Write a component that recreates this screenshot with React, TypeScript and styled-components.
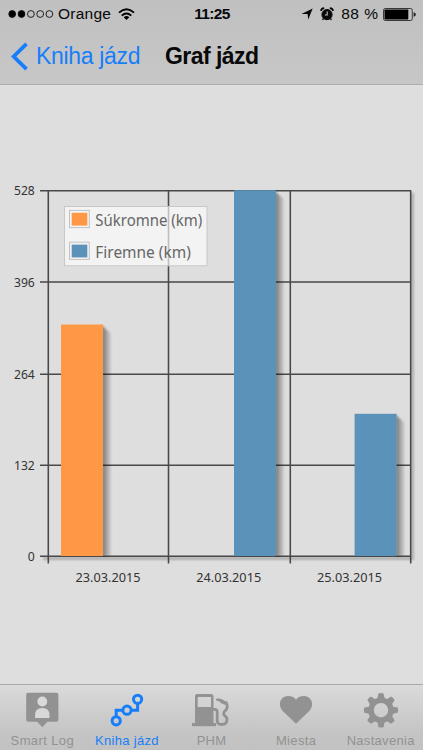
import React from 'react';
import styled, { createGlobalStyle } from 'styled-components';

const GlobalStyle = createGlobalStyle`
  * { box-sizing: border-box; }
  body { margin: 0; background: #dedede; font-family: "Liberation Sans", Arial, sans-serif; }
`;

const Screen = styled.div`
  width: 423px;
  height: 750px;
  display: flex;
  flex-direction: column;
  overflow: hidden;
  background: #dedede;
`;

const Header = styled.header`
  height: 85px;
  flex: none;
  background: linear-gradient(#c0c0c0, #c7c7c7);
  border-bottom: 1px solid #adadad;
`;

const StatusBar = styled.div`
  height: 28px;
  display: grid;
  grid-template-columns: 1fr auto 1fr;
  align-items: center;
  padding: 0 7px 0 8px;
  color: #080808;
`;

const StatusGroup = styled.div<{ $end?: boolean }>`
  display: flex;
  align-items: center;
  justify-content: ${(p) => (p.$end ? 'flex-end' : 'flex-start')};
`;

const StatusText = styled.span<{ $bold?: boolean; $spacing?: number; $left?: number; $right?: number }>`
  font-size: 15.5px;
  line-height: 28px;
  font-weight: ${(p) => (p.$bold ? 700 : 400)};
  letter-spacing: ${(p) => p.$spacing ?? 0}px;
  margin-left: ${(p) => p.$left ?? 0}px;
  margin-right: ${(p) => p.$right ?? 0}px;
  white-space: nowrap;
`;

const NavBar = styled.nav`
  height: 56px;
  display: flex;
  align-items: center;
  padding-left: 10px;
`;

const BackButton = styled.button`
  display: flex;
  align-items: center;
  gap: 8px;
  width: 155px;
  flex: none;
  padding: 0;
  border: 0;
  background: none;
  color: #177efb;
  font: 23px/56px "Liberation Sans", Arial, sans-serif;
  letter-spacing: -0.33px;
  white-space: nowrap;
`;

const Title = styled.h1`
  margin: 0;
  font-size: 23px;
  line-height: 56px;
  font-weight: 700;
  letter-spacing: -0.55px;
  color: #080808;
  white-space: nowrap;
`;

const Content = styled.main`
  flex: 1;
  min-height: 0;
  border-top: 1px solid #e2e2e2;
`;

const Chart = styled.svg`
  display: block;
  font-family: "Noto Sans", sans-serif;
`;

const TabBar = styled.footer`
  height: 66px;
  flex: none;
  display: grid;
  grid-template-columns: repeat(5, 1fr);
  border-top: 1px solid #a9a9a9;
  background: linear-gradient(#dadada, #c4c4c4 75%, #c2c2c2);
`;

const Tab = styled.div<{ $active?: boolean }>`
  display: flex;
  flex-direction: column;
  align-items: center;
  padding-top: 7px;
  color: ${(p) => (p.$active ? '#177efb' : '#929292')};
`;

const TabLabel = styled.span<{ $spacing: number }>`
  margin-top: 4px;
  font-size: 13px;
  line-height: 17px;
  letter-spacing: ${(p) => p.$spacing}px;
  white-space: nowrap;
`;

const ROWS = [
  { value: 528, y: 190.8 },
  { value: 396, y: 282 },
  { value: 264, y: 374.2 },
  { value: 132, y: 465.2 },
  { value: 0, y: 556.3 },
];
const COLUMNS = [48.3, 168.5, 290.3, 410.7];
const DATES = [
  { label: '23.03.2015', x: 75.5 },
  { label: '24.03.2015', x: 196.2 },
  { label: '25.03.2015', x: 317 },
];
const BARS = [
  { x: 61, y: 324.5, color: '#ff9845' },
  { x: 234, y: 190.2, color: '#5b92b9' },
  { x: 354.6, y: 413.8, color: '#5b92b9' },
];
const LEGEND = [
  { label: 'Súkromne (km)', y: 210.4, length: 107, color: '#ff9845' },
  { label: 'Firemne (km)', y: 242.2, length: 95.5, color: '#5b92b9' },
];

const TripChart = () => (
  <Chart width="423" height="598" viewBox="0 86 423 598">
    <defs>
      <filter id="soft" x="-30%" y="-10%" width="160%" height="120%">
        <feGaussianBlur stdDeviation="1" />
      </filter>
      <linearGradient id="shade">
        <stop offset="0" stopColor="#000" stopOpacity=".48" />
        <stop offset="1" stopColor="#000" stopOpacity=".06" />
      </linearGradient>
    </defs>
    <g fill="#888" filter="url(#soft)" opacity=".55">
      <rect x="411" y="193" width="3" height="366" />
      <rect x="43" y="557" width="371" height="3" />
    </g>
    <g stroke="#393939" strokeWidth="1.55" opacity=".9">
      {ROWS.map((r) => <line key={r.value} x1="40" x2="411" y1={r.y} y2={r.y} />)}
      {COLUMNS.map((x) => <line key={x} x1={x} x2={x} y1="190.2" y2="563.5" />)}
    </g>
    {BARS.map((b) => (
      <g key={b.x}>
        <path d={`M${b.x + 41} ${b.y + 1} L${b.x + 50} ${b.y + 9} V556 H${b.x + 41}Z`} fill="url(#shade)" filter="url(#soft)" />
        <rect x={b.x} y={b.y} width="42" height={556 - b.y} fill={b.color} />
      </g>
    ))}
    <rect x="64.5" y="206.5" width="142.5" height="59.3" fill="#fff" fillOpacity=".64" stroke="#c8c8c8" />
    {LEGEND.map((l) => (
      <g key={l.label}>
        <rect x="69.5" y={l.y} width="19.8" height="17.2" fill="#f3f3f3" stroke="#c2c2c2" />
        <rect x="71.7" y={l.y + 2.4} width="15.6" height="12.8" fill={l.color} />
        <text x="95.3" y={l.y + 15.8} textLength={l.length} lengthAdjust="spacingAndGlyphs" fontSize="15.5" fill="#666">{l.label}</text>
      </g>
    ))}
    <g fontSize="13.2" fill="#333">
      {ROWS.map((r) => (
        <text
          key={r.value}
          x={r.value ? 14 : 27.7}
          y={r.y + 4.5}
          textLength={r.value ? 20.8 : 7}
          lengthAdjust="spacingAndGlyphs"
        >
          {r.value}
        </text>
      ))}
      {DATES.map((d) => (
        <text key={d.label} x={d.x} y="582.3" textLength="65" lengthAdjust="spacingAndGlyphs">{d.label}</text>
      ))}
    </g>
  </Chart>
);

const SignalIcon = () => (
  <svg width="46" height="10" viewBox="0 0 46 10" fill="none" stroke="#111" strokeWidth=".9">
    {[4.2, 13.5, 22.9, 32.2, 41.4].map((x, i) => (
      <circle key={x} cx={x} cy="5" r={3.4} fill={i < 2 ? '#000' : 'none'} />
    ))}
  </svg>
);

const WifiIcon = () => (
  <svg width="17" height="13" viewBox="0 0 17 13" fill="none" stroke="#000" strokeWidth="1.9">
    <path d="M1 4.6Q8.5-2 16 4.6M3.7 7.6Q8.5 3.4 13.3 7.6" />
    <path d="M8.5 12 5.7 9.2Q8.5 7 11.3 9.2Z" fill="#000" stroke="none" />
  </svg>
);

const LocationIcon = () => (
  <svg width="12" height="12" viewBox="0 0 12 12"><path d="M11.7.4 7.2 11.5 6.6 6H.4Z" fill="#080808" /></svg>
);

const AlarmIcon = () => (
  <svg width="14" height="14" viewBox="0 0 14 14" fill="none" stroke="#080808">
    <circle cx="7" cy="7.6" r="5.1" fill="#080808" />
    <path d="M1 4.1Q1 1.3 4.2 1.1M9.8 1.1Q13 1.3 13 4.1" strokeWidth="1.6" />
    <path d="m3.6 11.5-1.1 1.4M10.4 11.5l1.1 1.4" strokeWidth="1.3" />
    <path d="M7.2 4.6V8H4.9" stroke="#c3c3c3" strokeWidth="1.1" />
  </svg>
);

const BatteryIcon = () => (
  <svg width="33" height="13" viewBox="0 0 33 13">
    <rect x=".5" y=".5" width="28.8" height="12" rx="1.8" fill="none" stroke="#383838" />
    <rect x="1.5" y="1.5" width="23.8" height="10" rx=".7" />
    <path d="M30.6 4.3Q32.8 4.6 32.8 6.5T30.6 8.8Z" fill="#222" />
  </svg>
);

const SmartLogIcon = () => (
  <svg width="36" height="36" viewBox="0 0 36 36">
    <path d="M4.2 .8H32.4Q34.4 .8 34.4 2.8V27.7Q34.4 29.7 32.4 29.7H23.4L18.3 35.2 13.1 29.7H4.2Q2.2 29.7 2.2 27.7V2.8Q2.2 .8 4.2 .8Z" fill="currentColor" />
    <circle cx="18.3" cy="9.5" r="4.9" fill="#dadada" />
    <path d="M11.1 26V22.8Q11.1 16 18.3 16T25.5 22.8V26Z" fill="#d8d8d8" />
  </svg>
);

const TripsIcon = () => (
  <svg width="36" height="36" viewBox="0 0 36 36" fill="none" stroke="currentColor" strokeWidth="3">
    <path d="M7.2 24.5V18.2H13.7M22.3 18.2H28.6V11.5" />
    <circle cx="7.2" cy="28.8" r="4.1" />
    <circle cx="18" cy="18.2" r="4.1" />
    <circle cx="28.6" cy="7.3" r="4.1" />
  </svg>
);

const FuelIcon = () => (
  <svg width="40" height="36" viewBox="0 0 40 36" fill="none">
    <path fillRule="evenodd" d="M6 2H20Q22.5 2 22.5 4.5V31H25V34.2H1V31H4V4Q4 2 6 2ZM6.7 5V15H20V5Z" fill="currentColor" />
    <path d="M22 17.3H23.5Q26.2 17.3 26.2 20V28.5Q26.2 32.5 30.5 32.5Q36 32.5 36 27.5Q36 25.2 33.5 23.5Q32.2 22.3 33.2 19.8Q37 16.8 36 12.5Q35.5 10.6 34.5 9.8" stroke="currentColor" strokeWidth="2.8" />
    <path d="M25.2 6.6Q28.8 6 31.8 7.7L35.9 10.2 34.5 13 29.7 10.9Q29 8.9 25.2 8.7Z" fill="currentColor" />
  </svg>
);

const HeartIcon = () => (
  <svg width="36" height="36" viewBox="0 0 36 36">
    <path d="M18 31.8 4.7 19C-1 12.7 2.5 3.9 10 3.9C14 3.9 16.7 5.5 18 7.8C19.3 5.5 22 3.9 26 3.9C33.5 3.9 37 12.7 31.3 19Z" fill="currentColor" />
  </svg>
);

const GearIcon = () => (
  <svg width="36" height="36" viewBox="0 0 36 36" fill="none" stroke="currentColor">
    <circle cx="18" cy="18.2" r="10" strokeWidth="5.6" />
    {[0, 45, 90, 135, 180, 225, 270, 315].map((a) => (
      <path key={a} d="M14.2 7.5 15.4 1.5Q18 .5 20.6 1.5L21.8 7.5Z" transform={`rotate(${a} 18 18.2)`} fill="currentColor" stroke="none" />
    ))}
  </svg>
);

const TABS = [
  { label: 'Smart Log', Icon: SmartLogIcon, spacing: 0.38 },
  { label: 'Kniha jázd', Icon: TripsIcon, active: true, spacing: 0.33 },
  { label: 'PHM', Icon: FuelIcon, spacing: 0.2 },
  { label: 'Miesta', Icon: HeartIcon, spacing: 0.35 },
  { label: 'Nastavenia', Icon: GearIcon, spacing: 0.3 },
];

export default function App() {
  return (
    <Screen>
      <GlobalStyle />
      <Header>
        <StatusBar>
          <StatusGroup>
            <SignalIcon />
            <StatusText $left={4} $right={7} $spacing={0.25}>Orange</StatusText>
            <WifiIcon />
          </StatusGroup>
          <StatusText $bold $spacing={-0.65}>11:25</StatusText>
          <StatusGroup $end>
            <LocationIcon />
            <StatusText $left={7} />
            <AlarmIcon />
            <StatusText $left={7} $right={4.5} $spacing={0.5}>88 %</StatusText>
            <BatteryIcon />
          </StatusGroup>
        </StatusBar>
        <NavBar>
          <BackButton>
            <svg width="18" height="29" viewBox="0 0 18 29" fill="none">
              <path d="M16.5 1.8 3.7 14.5 16.5 27.2" stroke="currentColor" strokeWidth="3.8" />
            </svg>
            Kniha jázd
          </BackButton>
          <Title>Graf jázd</Title>
        </NavBar>
      </Header>
      <Content><TripChart /></Content>
      <TabBar>
        {TABS.map(({ label, Icon, active, spacing }) => (
          <Tab key={label} $active={active}>
            <Icon />
            <TabLabel $spacing={spacing}>{label}</TabLabel>
          </Tab>
        ))}
      </TabBar>
    </Screen>
  );
}
